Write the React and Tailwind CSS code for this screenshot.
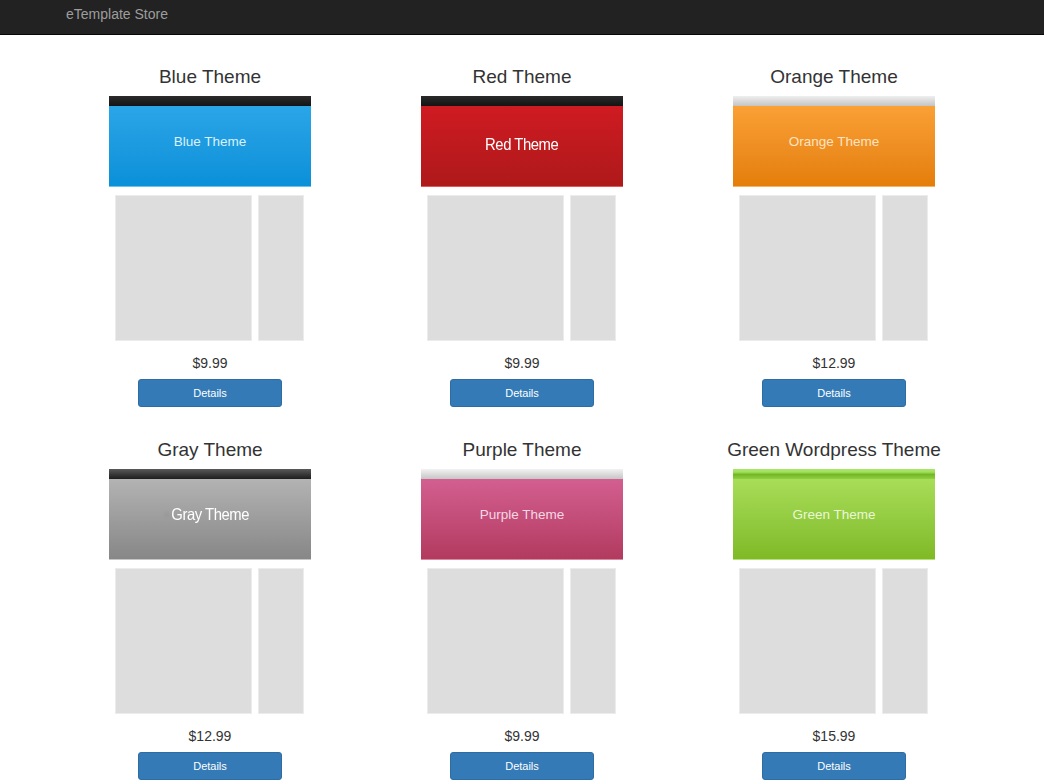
const themes = [
  {
    title: 'Blue Theme',
    label: 'Blue Theme',
    price: '$9.99',
    bar: 'bg-gradient-to-b from-[#2c2c2c] to-[#141414]',
    body: 'bg-gradient-to-b from-[#2aa5e8] to-[#0890d8]',
    edge: 'bg-[#6cc2ef]',
    text: 'text-[#dcf0fb] text-[13.5px] pb-[7px]',
  },
  {
    title: 'Red Theme',
    label: 'Red Theme',
    price: '$9.99',
    bar: 'bg-gradient-to-b from-[#2a2a2a] to-[#141414]',
    body: 'bg-gradient-to-b from-[#cf1b22] to-[#ae191a]',
    edge: 'bg-[#e0585c]',
    text: 'text-white text-[16.5px] tracking-[-0.5px] scale-x-90 pb-[3px]',
  },
  {
    title: 'Orange Theme',
    label: 'Orange Theme',
    price: '$12.99',
    bar: 'bg-gradient-to-b from-[#efefef] to-[#c4c4c4]',
    body: 'bg-gradient-to-b from-[#faa034] to-[#e47e08]',
    edge: 'bg-[#f3b36a]',
    text: 'text-[#fde3c2] text-[13.5px] pb-[7px]',
  },
  {
    title: 'Gray Theme',
    label: 'Gray Theme',
    price: '$12.99',
    bar: 'bg-gradient-to-b from-[#5a5a5a] to-[#1e1e1e]',
    body: 'bg-gradient-to-b from-[#b3b3b3] to-[#878787]',
    edge: 'bg-[#c6c6c6]',
    text: 'text-white text-[16.5px] tracking-[-0.5px] scale-x-90 pb-[9px] pr-[8px]',
    dot: true,
  },
  {
    title: 'Purple Theme',
    label: 'Purple Theme',
    price: '$9.99',
    bar: 'bg-gradient-to-b from-[#f2f2f2] to-[#c6c6c6]',
    body: 'bg-gradient-to-b from-[#d35f91] to-[#b23a5f]',
    edge: 'bg-[#d98aa3]',
    text: 'text-[#f6d7e4] text-[13.5px] pb-[7px]',
  },
  {
    title: 'Green Wordpress Theme',
    label: 'Green Theme',
    price: '$15.99',
    bar: 'bg-[linear-gradient(to_bottom,#a9e66a_0%,#a2e05e_30%,#74b823_55%,#8fcf45_100%)]',
    body: 'bg-gradient-to-b from-[#a8dd58] to-[#7fba25]',
    edge: 'bg-[#b6e27c]',
    text: 'text-[#eaf7d6] text-[13.5px] pb-[7px]',
  },
];

function Preview({ t }) {
  return (
    <div className="w-[202px] h-[250px] bg-white flex flex-col">
      <div className={`h-[10px] ${t.bar}`} />
      <div className={`h-[80px] flex items-center justify-center ${t.body}`}>
        <span className={`flex items-center gap-[2px] ${t.text}`}>
          {t.dot && <span className="w-[6px] h-[6px] rounded-full bg-[#9a9a9a] blur-[1px]" />}
          {t.label}
        </span>
      </div>
      <div className={`h-[1px] ${t.edge}`} />
      <div className="flex gap-[6px] pl-[6px] pt-[8px]">
        <div className="w-[137px] h-[146px] bg-[#dddddd] border border-[#ececec]" />
        <div className="w-[46px] h-[146px] bg-[#dddddd] border border-[#ececec]" />
      </div>
    </div>
  );
}

function ThemeCard({ t }) {
  return (
    <div className="flex flex-col items-center">
      <h3 className="text-[19px] leading-[22px] text-[#333] mb-[8px]">{t.title}</h3>
      <Preview t={t} />
      <div className="mt-[7px] text-[14px] leading-[20px] text-[#333]">{t.price}</div>
      <button
        type="button"
        className="mt-[6px] w-[144px] h-[28px] rounded-[3px] bg-[#337ab7] border border-[#2e6da4] text-white text-[11px]"
      >
        Details
      </button>
    </div>
  );
}

export default function App() {
  return (
    <div className="min-h-[784px] bg-white font-['Liberation_Sans',Arial,sans-serif]">
      <nav className="h-[35px] bg-[#222222] border-b border-[#080808] flex items-center pl-[66px] pb-[5px]">
        <span className="text-[14px] text-[#9d9d9d]">eTemplate Store</span>
      </nav>
      <div className="mx-auto w-[936px] grid grid-cols-3 gap-y-[32px] pt-[31px]">
        {themes.map((t) => (
          <ThemeCard key={t.title} t={t} />
        ))}
      </div>
    </div>
  );
}
